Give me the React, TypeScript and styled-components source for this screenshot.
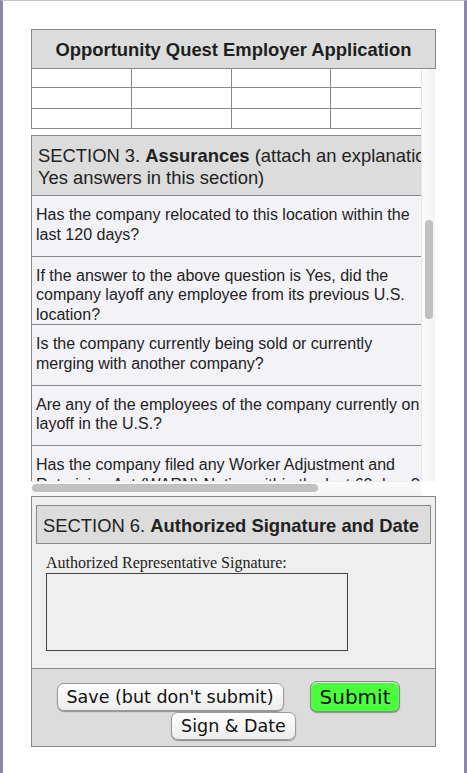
import styled, { createGlobalStyle } from "styled-components";

const GlobalStyle = createGlobalStyle`
    html, body {
        margin: 0;
        padding: 0;
        background: #fff;
    }
    body {
        font-family: "Liberation Sans", Arial, sans-serif;
        color: #222;
    }
`;

const Frame = styled.div`
    min-height: 100vh;
    box-sizing: border-box;
    border-top: 1px solid #c4c4c4;
    border-left: 3px solid #8a88aa;
    border-right: 3px solid #8a88aa;
    padding: 28px;
`;

const Page = styled.div`
    width: 405px;
`;

const TitleBar = styled.h1`
    margin: 0;
    height: 40px;
    box-sizing: border-box;
    border: 1px solid #888;
    background: #dcdcdc;
    color: #1e1e1e;
    font-size: 18.4px;
    font-weight: bold;
    line-height: 39px;
    text-align: center;
`;

const ScrollArea = styled.div`
    display: grid;
    grid-template-columns: 390px 14px;
    grid-template-rows: 412px 15px;
`;

const Viewport = styled.div`
    overflow: hidden;
`;

const VTrack = styled.div`
    background: linear-gradient(to right, #fbfbfb, #f2f2f2);
    border-left: 1px solid #e6e6e6;
    display: flex;
    flex-direction: column;
    align-items: center;
`;

const VThumb = styled.div`
    width: 8px;
    border-radius: 4px;
    background: #c1c1c1;
`;

const HTrack = styled.div`
    background: linear-gradient(#fbfbfb, #f4f4f4);
    border-top: 1px solid #ececec;
    padding: 2px 0 0 1px;
`;

const HThumb = styled.div`
    height: 8px;
    border-radius: 4px;
    background: #c1c1c1;
`;

const Corner = styled.div`
    background: #fff;
`;

const Content = styled.div`
    width: 530px;
    margin-top: -2px;
`;

const GridTable = styled.div`
    display: grid;
    grid-template-columns: 100px 100px 99px 120px;
    grid-auto-rows: 21px 21px 20px;
    width: 420px;
    border-left: 1px solid #888;
`;

const Cell = styled.div`
    box-sizing: border-box;
    background: #fff;
    border-right: 1px solid #888;
    border-bottom: 1px solid #888;
`;

const Section = styled.div`
    margin-top: 6px;
    border: 1px solid #888;
`;

const SectionHead = styled.div<{ $boxed?: boolean }>`
    background: #dcdcdc;
    padding: 9px 7px 6px 6px;
    font-size: 18.4px;
    line-height: 22px;
    color: #222;
    white-space: nowrap;
    border-bottom: 1px solid #888;
    ${(p) => p.$boxed && "border: 1px solid #888;"}
`;

const QuestionRow = styled.div`
    display: flex;
    min-height: 60.5px;
    box-sizing: border-box;
    background: #f3f2f7;
    border-bottom: 1px solid #888;
`;

const QuestionText = styled.div`
    width: 396px;
    box-sizing: border-box;
    padding: 9px 4px 0;
    font-size: 16px;
    line-height: 19.5px;
    color: #222;
`;

const SignSection = styled.div`
    border: 1px solid #888;
    background: #efefef;
    padding: 8px 4px 17px;
`;

const Label = styled.div`
    margin: 10px 0 2px 10px;
    font-family: "Liberation Serif", "Times New Roman", serif;
    font-size: 16px;
    line-height: 17px;
    color: #222;
`;

const SignatureBox = styled.div`
    margin-left: 10px;
    width: 302px;
    height: 78px;
    box-sizing: border-box;
    border: 1px solid #444;
    background: #efefef;
`;

const Footer = styled.div`
    display: flex;
    flex-wrap: wrap;
    justify-content: center;
    align-items: center;
    column-gap: 26px;
    border: 1px solid #888;
    border-top: none;
    background: #dcdcdc;
    padding: 12px 4px 6px;
`;

const Btn = styled.button<{ $primary?: boolean }>`
    font-family: "DejaVu Sans", "Lucida Grande", sans-serif;
    font-size: ${(p) => (p.$primary ? "20px" : "17.5px")};
    height: ${(p) => (p.$primary ? "31px" : "28px")};
    padding: 0 9px;
    margin-right: ${(p) => (p.$primary ? "10px" : "0")};
    color: #111;
    border: 1px solid ${(p) => (p.$primary ? "#8a8a8a" : "#9a9a9a")};
    border-radius: 7px;
    background: ${(p) =>
        p.$primary ? "#4cff3c" : "linear-gradient(#fefefe, #ededed)"};
    box-shadow: 0 1px 1px rgba(0, 0, 0, 0.35), inset 0 1px 0 rgba(255, 255, 255, 0.8);
    cursor: pointer;
`;

const questions = [
    "Has the company relocated to this location within the last 120 days?",
    "If the answer to the above question is Yes, did the company layoff any employee from its previous U.S. location?",
    "Is the company currently being sold or currently merging with another company?",
    "Are any of the employees of the company currently on layoff in the U.S.?",
    "Has the company filed any Worker Adjustment and Retraining Act (WARN) Notice within the last 60 days?",
];

// scroll state of the form body, as the screenshot shows it
const scroll = { top: 151, thumbH: 99, thumbW: 286 };

function App() {
    return (
        <>
            <GlobalStyle />
            <Frame>
                <Page>
                    <TitleBar>Opportunity Quest Employer Application</TitleBar>
                    <ScrollArea>
                        <Viewport>
                            <Content>
                                <GridTable>
                                    {Array.from({ length: 12 }).map((_, i) => (
                                        <Cell key={i} />
                                    ))}
                                </GridTable>
                                <Section>
                                    <SectionHead>
                                        SECTION 3. <b>Assurances</b> (attach an explanation for all
                                        <br />
                                        Yes answers in this section)
                                    </SectionHead>
                                    {questions.map((q) => (
                                        <QuestionRow key={q}>
                                            <QuestionText>{q}</QuestionText>
                                        </QuestionRow>
                                    ))}
                                </Section>
                            </Content>
                        </Viewport>
                        <VTrack>
                            <VThumb style={{ marginTop: scroll.top, height: scroll.thumbH }} />
                        </VTrack>
                        <HTrack>
                            <HThumb style={{ width: scroll.thumbW }} />
                        </HTrack>
                        <Corner />
                    </ScrollArea>
                    <SignSection>
                        <SectionHead $boxed>
                            SECTION 6. <b>Authorized Signature and Date</b>
                        </SectionHead>
                        <Label>Authorized Representative Signature:</Label>
                        <SignatureBox />
                    </SignSection>
                    <Footer>
                        <Btn>Save (but don't submit)</Btn>
                        <Btn $primary>Submit</Btn>
                        <Btn>Sign &amp; Date</Btn>
                    </Footer>
                </Page>
            </Frame>
        </>
    );
}

export default App;
